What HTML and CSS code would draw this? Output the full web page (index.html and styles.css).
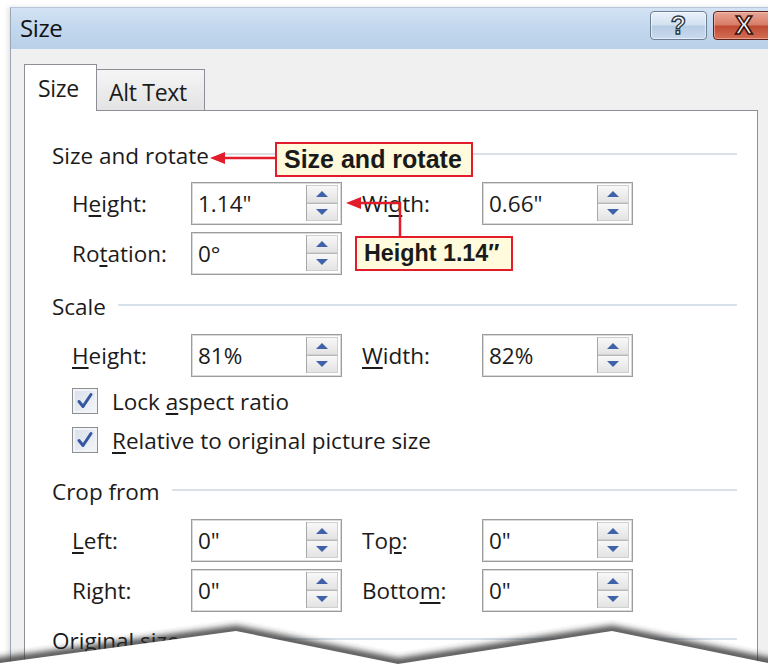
FILE: index.html
```html
<!DOCTYPE html>
<html lang="en">
<head>
<meta charset="utf-8">
<title>Size</title>
<link rel="stylesheet" href="styles.css">
</head>
<body>
<div class="stage">
  <div class="window">
    <div class="titlebar">
      <span class="title">Size</span>
      <div class="caption-btns">
        <span class="cap help">?</span>
        <span class="cap close">X</span>
      </div>
    </div>
    <div class="client">
      <div class="tabs">
        <div class="tab active">Size</div>
        <div class="tab">Alt Text</div>
      </div>
      <div class="panel">
        <section class="group first">
          <div class="group-head"><span>Size and rotate</span></div>
          <div class="fields">
            <span class="lbl">H<u>e</u>ight:</span>
            <div class="spin"><span class="val">1.14"</span><span class="arrows"><i class="up"></i><i class="dn"></i></span></div>
            <span class="lbl second">Wi<u>d</u>th:</span>
            <div class="spin"><span class="val">0.66"</span><span class="arrows"><i class="up"></i><i class="dn"></i></span></div>
            <span class="lbl">Ro<u>t</u>ation:</span>
            <div class="spin"><span class="val">0°</span><span class="arrows"><i class="up"></i><i class="dn"></i></span></div>
          </div>
        </section>

        <section class="group">
          <div class="group-head"><span>Scale</span></div>
          <div class="fields">
            <span class="lbl"><u>H</u>eight:</span>
            <div class="spin"><span class="val">81%</span><span class="arrows"><i class="up"></i><i class="dn"></i></span></div>
            <span class="lbl second"><u>W</u>idth:</span>
            <div class="spin"><span class="val">82%</span><span class="arrows"><i class="up"></i><i class="dn"></i></span></div>
          </div>
          <div class="checks">
            <label class="opt"><span class="check"><svg viewBox="0 0 26 26" width="26" height="26"><path d="M7 13.5 L11 18.5 L19 6.5" /></svg></span><span>Lock <u>a</u>spect ratio</span></label>
            <label class="opt"><span class="check"><svg viewBox="0 0 26 26" width="26" height="26"><path d="M7 13.5 L11 18.5 L19 6.5" /></svg></span><span><u>R</u>elative to original picture size</span></label>
          </div>
        </section>

        <section class="group crop">
          <div class="group-head"><span>Crop from</span></div>
          <div class="fields">
            <span class="lbl"><u>L</u>eft:</span>
            <div class="spin"><span class="val">0"</span><span class="arrows"><i class="up"></i><i class="dn"></i></span></div>
            <span class="lbl second">To<u>p</u>:</span>
            <div class="spin"><span class="val">0"</span><span class="arrows"><i class="up"></i><i class="dn"></i></span></div>
            <span class="lbl">Ri<u>g</u>ht:</span>
            <div class="spin"><span class="val">0"</span><span class="arrows"><i class="up"></i><i class="dn"></i></span></div>
            <span class="lbl second">Botto<u>m</u>:</span>
            <div class="spin"><span class="val">0"</span><span class="arrows"><i class="up"></i><i class="dn"></i></span></div>
          </div>
        </section>

        <section class="group last">
          <div class="group-head"><span>Original size</span></div>
        </section>
      </div>
    </div>
  </div>

  <!-- callouts over the dialog -->
  <div class="callout callout-rotate">Size and rotate</div>
  <div class="callout callout-height">Height 1.14″</div>
  <svg class="leaders" width="768" height="664" viewBox="0 0 768 664">
    <g stroke="#e21c2a" stroke-width="2.5" fill="none">
      <path d="M222 158 H276" />
      <path d="M400 237 V203 H356" />
    </g>
    <g fill="#e21c2a">
      <path d="M210 158 L225 152 L225 164 Z" />
      <path d="M346 203 L361 197 L361 209 Z" />
    </g>
  </svg>

  <!-- torn bottom edge -->
  <svg class="torn" width="768" height="80" viewBox="0 0 768 80">
    <defs>
      <filter id="edgeBlur" x="-5%" y="-100%" width="110%" height="300%">
        <feGaussianBlur stdDeviation="3" />
      </filter>
    </defs>
    <path d="M-10 80 L0 79 L236 47 L398 80 L612 47 L768 79 L780 80" stroke="#2a2a2a" stroke-width="9" fill="none" opacity="0.85" filter="url(#edgeBlur)" transform="translate(0,-1)" />
    <path d="M-10 80 L0 79 L236 47 L398 80 L612 47 L768 79 L780 80 L780 90 L-10 90 Z" fill="#ffffff" />
  </svg>
</div>
</body>
</html>
```

FILE: styles.css
```css
* { box-sizing: border-box; }

html, body {
  margin: 0;
  padding: 0;
  background: #ffffff;
}

.stage {
  position: relative;
  width: 768px;
  height: 664px;
  overflow: hidden;
  font-family: "Open Sans", "Noto Sans", sans-serif;
  color: #1b1b1b;
}

/* dialog window */
.window {
  margin: 7px 0 0 10px;
  width: 790px;
  border-left: 1px solid #9aa6b4;
  border-top: 1px solid #b7c6d8;
  box-shadow: -2px 0 5px rgba(0, 0, 0, 0.12);
}

.titlebar {
  height: 41px;
  display: flex;
  align-items: flex-start;
  justify-content: space-between;
  background: linear-gradient(#d3e3f4, #c3d8ee 45%, #b9d0e8);
}

.title {
  font-size: 24px;
  line-height: 40px;
  padding-left: 9px;
  letter-spacing: -0.4px;
  color: #111;
}

.caption-btns {
  display: flex;
  gap: 6px;
  margin-top: 3px;
  margin-right: 25px;
}

.cap {
  height: 29px;
  border-radius: 4px;
  display: flex;
  align-items: center;
  justify-content: center;
  font-family: "Liberation Sans", Arial, sans-serif;
  font-weight: bold;
  font-size: 25px;
  color: #fff;
  -webkit-text-stroke: 1.4px #2d3947;
}

.help {
  width: 57px;
  border: 1px solid #6e7f94;
  background: linear-gradient(#e9f1fa, #d2e1f1 48%, #b7cce3 52%, #c9daee);
  box-shadow: inset 0 0 0 1px rgba(255, 255, 255, 0.55);
}

.close {
  width: 62px;
  border: 1px solid #5e2219;
  background: linear-gradient(#e8a796, #d77c66 48%, #c04a33 52%, #d36e55);
  box-shadow: inset 0 0 0 1px rgba(255, 210, 200, 0.5);
  font-size: 26px;
  -webkit-text-stroke: 1.6px #3a1510;
}

.client {
  background: #f0f0f0;
  padding: 15px 0 0 13px;
  height: 640px;
}

/* tabs */
.tabs {
  display: flex;
  align-items: flex-end;
  height: 46px;
  font-size: 23px;
  letter-spacing: -0.3px;
}

.tab {
  border: 1px solid #8c9096;
  border-bottom: none;
  display: flex;
  align-items: center;
}

.tab.active {
  width: 73px;
  height: 47px;
  margin-bottom: -1px;
  background: #fff;
  padding-left: 13px;
  position: relative;
  z-index: 1;
}

.tab:not(.active) {
  width: 108px;
  height: 41px;
  border-left: none;
  padding-left: 12px;
  padding-top: 4px;
  background: linear-gradient(#f5f5f5, #e3e3e3);
}

.panel {
  width: 734px;
  border: 1px solid #8c9096;
  background: #fff;
  padding: 30px 20px 0 27px;
  height: 600px;
}

/* groups */
.group + .group { margin-top: 17px; }
.group.crop { margin-top: 24px; }
.group.last { margin-top: 14px; }

.group-head {
  display: flex;
  align-items: center;
  height: 28px;
  font-size: 22.5px;
  color: #1b1b1b;
}

.group-head::after {
  content: "";
  flex: 1;
  height: 2px;
  margin-left: 12px;
  margin-top: -2px;
  background: #d8e1ea;
}

.fields {
  display: grid;
  grid-template-columns: 119px 151px 140px 151px;
  grid-auto-rows: 43px;
  row-gap: 7px;
  margin: 13px 0 0 20px;
}

.group:not(.first) .fields { margin-top: 14px; }

.lbl {
  display: flex;
  align-items: center;
  font-size: 22.5px;
}

.lbl.second { padding-left: 20px; }

u {
  text-decoration-thickness: 1.5px;
  text-underline-offset: 3px;
}

/* spin boxes */
.spin {
  display: flex;
  border: 1px solid #9c9c9c;
  box-shadow: inset 0 0 0 1px #d9d9d9;
  background: #fff;
}

.val {
  flex: 1;
  display: flex;
  align-items: center;
  padding-left: 6px;
  font-size: 22.5px;
}

.arrows {
  width: 32px;
  display: flex;
  flex-direction: column;
  margin: 2px 3px 3px 0;
  border-left: 1px solid #a8a8a8;
}

.arrows i {
  flex: 1;
  position: relative;
  background: linear-gradient(#f8f8f8, #e3e3e3);
  border: 1px solid #cfcfcf;
  border-left: none;
}

.arrows i + i { border-top: 1px solid #b9b9b9; }

.arrows i::after {
  content: "";
  position: absolute;
  left: 50%;
  top: 50%;
  margin-left: -6px;
  border-left: 6px solid transparent;
  border-right: 6px solid transparent;
}

.arrows .up::after {
  margin-top: -3px;
  border-bottom: 6px solid #3f62a8;
}

.arrows .dn::after {
  margin-top: -3px;
  border-top: 6px solid #3f62a8;
}

/* check boxes */
.checks {
  display: flex;
  flex-direction: column;
  gap: 13px;
  margin: 11px 0 0 20px;
}

.opt {
  display: flex;
  align-items: center;
  gap: 14px;
  height: 26px;
  font-size: 22.5px;
}

.check {
  width: 26px;
  height: 26px;
  flex: none;
  border: 1px solid #8e8f8f;
  background: linear-gradient(135deg, #d8dfe8, #f4f6f9);
  box-shadow: inset 0 0 0 2px #f0f3f7;
  display: block;
}

.check svg {
  display: block;
  margin: -1px;
}

.check path {
  fill: none;
  stroke: #3556a0;
  stroke-width: 3;
  stroke-linecap: round;
  stroke-linejoin: round;
}

/* callouts */
.callout {
  position: absolute;
  border: 2.5px solid #e21c2a;
  background: #fffbdc;
  font-family: "Liberation Sans", Arial, sans-serif;
  font-weight: bold;
  color: #1a1a1a;
  display: flex;
  align-items: center;
  white-space: nowrap;
}

.callout-rotate {
  left: 275px;
  top: 142px;
  width: 198px;
  height: 35px;
  padding-left: 7px;
  font-size: 25px;
}

.callout-height {
  left: 355px;
  top: 236px;
  width: 158px;
  height: 35px;
  padding-left: 7px;
  font-size: 23.3px;
}

.leaders {
  position: absolute;
  left: 0;
  top: 0;
}

.torn {
  position: absolute;
  left: 0;
  top: 584px;
}
```
